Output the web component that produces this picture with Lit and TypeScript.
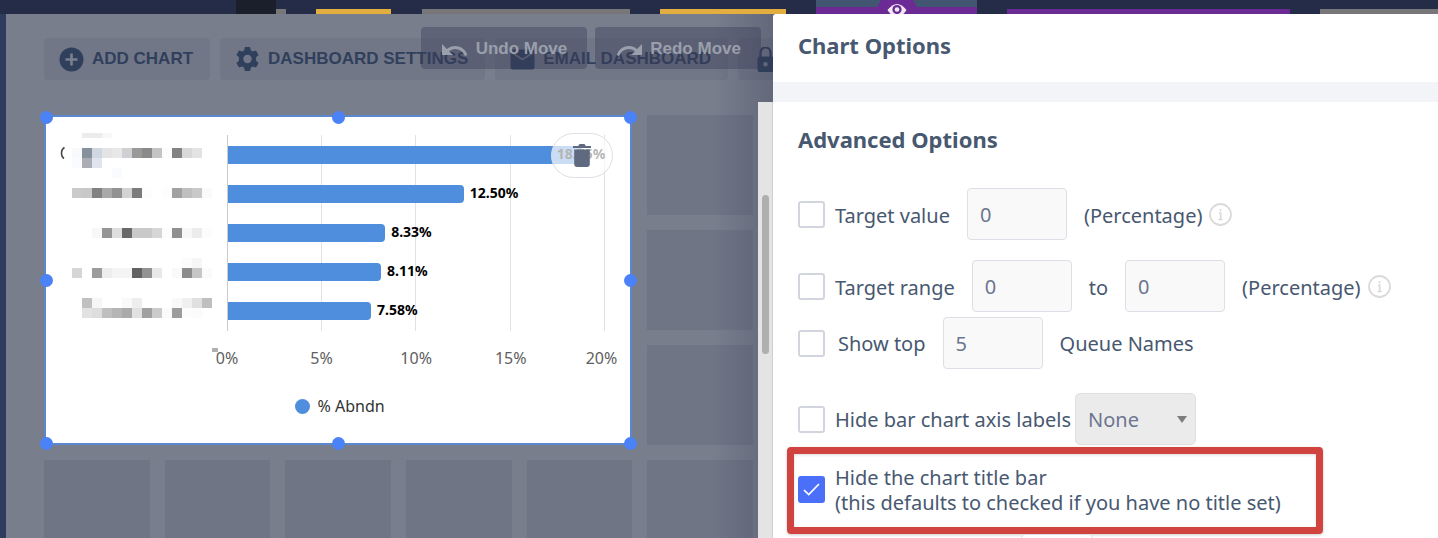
import { LitElement, html, css, svg, nothing } from "lit";
import { customElement, state } from "lit/decorators.js";

interface Bar {
  value: number;
}

const MAX = 20;
const BARS: Bar[] = [{ value: 18.75 }, { value: 12.5 }, { value: 8.33 }, { value: 8.11 }, { value: 7.58 }];
const TICKS = [0, 5, 10, 15, 20];

// Masked queue names: [y, height, first column x, shades of 10px cells]
const MASK: [number, number, number, string[]][] = [
  [17, 5, 36, ["ececec", "ececec", "f7f7f7"]],
  [32, 10, 26, ["f8f9fb", "87909d", "d0d6e2", "e4e4e4", "e8e8e8", "cfd0d4", "999999", "8a8a8a", "c4c4c4", "fcfcfc", "838383", "d8d8d8", "e3e3e3"]],
  [42, 10, 26, ["fafbfe", "abadb6", "e0e4ec"]],
  [52, 10, 66, ["fafbfe"]],
  [72, 10, 26, ["cacaca", "c8c8c8", "818181", "a9a9a9", "929292", "d3d3d3", "7b7b7b", "fdfdfd", "ffffff", "fdfdfd", "a1a1a1", "bfbfbf", "c9c9c9", "fafafa"]],
  [112, 10, 46, ["f8f8f8", "959595", "dedede", "696969", "c9c9c9", "c9c9c9", "d6d6d6", "fcfcfc", "909090", "f7f7f7", "ececec", "fcfcfc"]],
  [142, 10, 126, ["ffffff", "fbfbfb", "f6f6f6"]],
  [152, 10, 26, ["d6d6d6", "ffffff", "9c9c9c", "ededed", "f4f4f4", "f4f4f4", "626262", "929292", "e8e8e8", "ffffff", "f9f9f9", "8c8c8c", "c6c6c6", "fafafa"]],
  [182, 10, 36, ["c0c0c0", "f6f6f6", "ffffff", "ffffff", "f9f9f9", "eeeeee", "ffffff", "ffffff", "ffffff", "f9f9f9", "f0f0f0", "e0e0e0", "bfbfbf"]],
  [192, 10, 36, ["e2e2e2", "dddddd", "bfbfbf", "b5b5b5", "aaaaaa", "e1e1e1", "a0a0a0", "cbcbcb", "fafafa", "9d9d9d", "fcfcfc", "fbfbfb"]],
];

const icons = {
  add: svg`<circle cx="12" cy="12.500" r="12"/><path d="M12 6.500v12M6 12.500h12" stroke="#7a808e" stroke-width="2.600"/>`,
  gear: svg`<path fill-rule="evenodd" d="M9.400 0h5.200l.7 3.200 2 1.200 3.200-1 2.600 4.500-2.500 2.300v3.600l2.500 2.300-2.600 4.500-3.200-1-2 1.200-.7 3.200H9.400l-.7-3.200-2-1.200-3.200 1L.9 16.100l2.500-2.300v-3.600L.9 7.900l2.600-4.500 3.200 1 2-1.200zM12 7.800a4.200 4.200 0 1 0 0 8.400 4.200 4.200 0 0 0 0-8.400z"/>`,
  mail: svg`<path d="M2 2.500h20a2 2 0 0 1 2 2v16a2 2 0 0 1-2 2H2a2 2 0 0 1-2-2v-16a2 2 0 0 1 2-2z"/><path d="M2 6l10 6.500L22 6" fill="none" stroke="#6a7080" stroke-width="1.800"/>`,
  lock: svg`<path fill-rule="evenodd" d="M6 9.500h12a2 2 0 0 1 2 2V23a2 2 0 0 1-2 2H6a2 2 0 0 1-2-2V11.500a2 2 0 0 1 2-2zm6 5.500a2.300 2.300 0 1 0 0 4.600 2.300 2.300 0 0 0 0-4.600z"/><path d="M7 10V5.500a5 5 0 0 1 10 0V10" fill="none" stroke="currentColor" stroke-width="2.200"/>`,
  undo: svg`<path d="M0 4v11h11L7 11.200a10 10 0 0 1 15.800 4.800l2.700-.9A13 13 0 0 0 4.900 9z"/>`,
  redo: svg`<path d="M26 4v11H15l4-3.800A10 10 0 0 0 3.200 16l-2.700-.9A13 13 0 0 1 21.100 9z"/>`,
  trash: svg`<path d="M0 2h5.200L6.500 0h5l1.300 2H18v2.100H0z"/><path d="M1.200 5.500h15.600V20a3 3 0 0 1-3 3H4.200a3 3 0 0 1-3-3z"/>`,
};

@customElement("app-root")
export class AppRoot extends LitElement {
  @state() private hideTitle = true;

  static styles = css`
    :host {
      display: flex;
      flex-direction: column;
      height: 100vh;
      overflow: hidden;
      background: #787e8c;
      font-family: "Noto Sans", "Open Sans", sans-serif;
      color: #475870;
    }
    * {
      box-sizing: border-box;
    }
    svg {
      display: block;
      flex: none;
    }
    button,
    input,
    select {
      font: inherit;
      margin: 0;
    }
    .strip {
      flex: none;
      height: 14px;
      display: grid;
      align-items: end;
      grid-template-columns: 236fr 40fr 10fr 30fr 75fr 31fr 208fr 30fr 126fr 30fr 161fr 30fr 283fr 30fr 118fr;
      background: #242c47;
    }
    .seg {
      height: 5px;
    }
    .ink {
      height: 14px;
      background: #1a1f2b;
    }
    .grey {
      background: #77777a;
    }
    .yellow {
      background: #e2ae3f;
    }
    .purple {
      background: #6b2a94;
    }
    .active {
      height: 14px;
      display: flex;
      justify-content: center;
      background: linear-gradient(#425672 7px, #6b2a94 7px);
    }
    .body {
      flex: 1;
      min-height: 0;
      display: flex;
    }
    .rail {
      flex: none;
      width: 6px;
      background: #2f3c5e;
    }
    .wrap {
      flex: 1;
      min-width: 0;
      display: flex;
      position: relative;
      overflow: hidden;
    }
    .dash {
      flex: 1;
      min-width: 0;
      padding: 24px 20px 0 38px;
    }
    .tools {
      display: flex;
      gap: 10px;
      height: 77px;
      align-items: flex-start;
      margin-right: -35px;
      overflow: hidden;
    }
    .tool {
      flex: none;
      display: flex;
      align-items: center;
      gap: 8px;
      height: 42px;
      padding: 0 17px 0 15px;
      border: 0;
      border-radius: 4px;
      background: #717787;
      color: #30405c;
      font: bold 17px "Liberation Sans", Arial, sans-serif;
    }
    .history {
      position: absolute;
      top: 13px;
      right: 12px;
      display: flex;
      gap: 8px;
    }
    .step {
      display: flex;
      align-items: center;
      gap: 8px;
      height: 42px;
      padding: 1px 20px 0 21px;
      border: 0;
      border-radius: 4px;
      background: rgba(58, 61, 88, 0.4);
      color: #9a9fac;
      font: bold 17px "Liberation Sans", Arial, sans-serif;
    }
    .grid {
      display: grid;
      grid-template-columns: repeat(6, 1fr);
      grid-auto-rows: 100px;
      gap: 15px;
      margin-right: -15px;
    }
    .tile {
      background: #6f7585;
    }
    .card {
      grid-column: 1 / span 5;
      grid-row: 1 / span 3;
      position: relative;
      display: flex;
      flex-direction: column;
      border: 2px solid #5b86d0;
      background: #fff;
    }
    .handle {
      position: absolute;
      width: 13px;
      height: 13px;
      margin: -6px;
      border-radius: 50%;
      background: #4c82f7;
    }
    .chart {
      display: grid;
      grid-template-columns: 181px 1fr;
      padding: 18px 25px 0 0;
    }
    .names {
      margin-top: -19px;
    }
    .plot {
      position: relative;
      height: 196px;
      border-left: 1px solid #c9cbd2;
      background: repeating-linear-gradient(90deg, transparent 0 calc(25% - 1px), #e1e1e4 calc(25% - 1px) 25%);
    }
    .line {
      position: relative;
      display: flex;
      align-items: center;
      height: 39px;
      gap: 6px;
      color: #000;
      font-size: 14px;
      line-height: 18px;
      font-weight: 700;
    }
    .bar {
      flex: none;
      height: 18px;
      border-radius: 0 4px 4px 0;
      background: #4f8edc;
    }
    .value {
      padding-bottom: 2px;
    }
    .inside {
      position: absolute;
      right: 0;
    }
    .axis {
      display: grid;
      grid-template-columns: repeat(4, 25%) 87px;
      margin: 16px 0 0 -12.5%;
      width: 100%;
      font-size: 16px;
      line-height: 22px;
      color: #606060;
      text-align: center;
    }
    .legend {
      display: flex;
      align-items: center;
      justify-content: center;
      gap: 8px;
      padding-left: 3px;
      margin-top: 26px;
      font-size: 16px;
      line-height: 22px;
      color: #333;
    }
    .dot {
      width: 15px;
      height: 15px;
      border-radius: 50%;
      background: #4f8edc;
    }
    .trash {
      position: absolute;
      top: 16px;
      right: 17px;
      width: 62px;
      height: 45px;
      display: grid;
      place-items: center;
      padding: 0;
      border: 1px solid #dedfe6;
      border-radius: 23px;
      background: rgba(255, 255, 255, 0.7);
      color: #5f6a80;
    }
    .track {
      flex: none;
      position: relative;
      width: 15px;
      margin-top: 88px;
      padding: 93px 3px 0 4px;
      background: #e4e4e4;
      border-right: 1px solid #cfcfcf;
    }
    .thumb {
      height: 159px;
      border-radius: 4px;
      background: #afafaf;
    }
    .shade {
      position: absolute;
      top: 0;
      right: 0;
      bottom: 0;
      width: 60px;
      background: linear-gradient(90deg, rgba(50, 55, 80, 0), rgba(50, 55, 80, 0.3));
      pointer-events: none;
    }
    .drawer {
      flex: 0 0 46.25%;
      display: flex;
      flex-direction: column;
      overflow: hidden;
      border-radius: 4px 0 0 0;
      background: #f3f4f7;
    }
    .head,
    .options {
      flex: none;
      background: #fff;
      padding: 0 25px;
    }
    .head {
      height: 68px;
      margin-bottom: 20px;
    }
    .options {
      border-radius: 4px 0 0 0;
    }
    .title {
      margin: 0;
      font-size: 22px;
      line-height: 30px;
      font-weight: 700;
    }
    .head .title {
      padding-top: 16px;
    }
    .options .title {
      padding-top: 22px;
      margin-bottom: 34px;
    }
    .row {
      display: flex;
      align-items: center;
      height: 52px;
      font-size: 20px;
      line-height: 25px;
    }
    .row + .row {
      margin-top: 20px;
    }
    .row + .tight {
      margin-top: 5px;
    }
    .row + .loose {
      margin-top: 24px;
    }
    .txt {
      padding-top: 3px;
    }
    .tick {
      display: flex;
      align-items: center;
      gap: 10px;
    }
    .wide {
      gap: 13px;
    }
    .box {
      display: grid;
      place-items: center;
    }
    .box > * {
      grid-area: 1 / 1;
    }
    .box svg {
      pointer-events: none;
    }
    .check {
      appearance: none;
      width: 27px;
      height: 27px;
      border: 2px solid #d2d5dd;
      border-radius: 3px;
      background: #fff;
    }
    .check:checked {
      border-color: #4b6ff8;
      background: #4b6ff8;
    }
    .num {
      width: 100px;
      height: 52px;
      margin: 0 17px;
      padding: 0 12px;
      border: 1px solid #dddfe6;
      border-radius: 4px;
      background: #f9f9f9;
      color: #6b7690;
    }
    .info {
      margin-left: 7px;
    }
    .pick {
      margin-left: 4px;
      display: grid;
      align-items: center;
      justify-items: end;
    }
    .pick > * {
      grid-area: 1 / 1;
    }
    .pick svg {
      margin-right: 9px;
      pointer-events: none;
      z-index: 1;
    }
    .select {
      appearance: none;
      width: 121px;
      height: 52px;
      padding: 0 12px;
      border: 1px solid #dedfe2;
      border-radius: 5px;
      background: #ebebeb;
      color: #6b7690;
    }
    .mark {
      display: flex;
      align-items: center;
      width: 536px;
      max-width: 100%;
      height: 87px;
      margin: 2px 0 0 -11px;
      padding: 0 0 2px 4px;
      border: 7px solid #d0433f;
      border-radius: 4px;
      box-shadow: 0 1px 3px rgba(0, 0, 0, 0.2), inset 0 1px 3px rgba(0, 0, 0, 0.15);
      font-size: 20px;
      line-height: 25px;
    }
    .next {
      width: 72px;
      height: 52px;
      margin-left: 223px;
      border: 1px solid #dddfe6;
      border-radius: 4px;
      background: #fff;
    }
  `;

  private tool(icon: unknown, label: string, text = true) {
    return html`<button class="tool" type="button" aria-label=${label}>
      <svg width="25" height="25" viewBox="0 0 24 25" fill="currentColor" aria-hidden="true">${icon}</svg>${text
        ? label
        : nothing}
    </button>`;
  }

  private step(icon: unknown, label: string) {
    return html`<button class="step" type="button">
      <svg width="26" height="20" viewBox="0 0 26 18" fill="currentColor" aria-hidden="true">${icon}</svg>${label}
    </button>`;
  }

  private box(id: string, checked = false) {
    return html`<span class="box">
      <input class="check" type="checkbox" id=${id} .checked=${checked}
        @change=${(e: Event) => {
          if (id === "hide-title") this.hideTitle = (e.target as HTMLInputElement).checked;
        }} />
      ${checked
        ? html`<svg width="17" height="13" viewBox="0 0 17 13" aria-hidden="true">
            <path d="M1 7l4.700 4.500L16 1" fill="none" stroke="#fff" stroke-width="1.700" />
          </svg>`
        : nothing}
    </span>`;
  }

  private info() {
    return html`<svg class="info" width="23" height="23" viewBox="0 0 23 23" role="img" aria-label="Info">
      <circle cx="11.500" cy="11.500" r="10.500" fill="none" stroke="#dadada" stroke-width="1.800" />
      <path d="M11.500 6v2.200M10 10.200h1.700v6M9.500 16.500h4" fill="none" stroke="#d8d8d8" stroke-width="1.600" />
    </svg>`;
  }

  private chart() {
    return html`<section class="card">
      <div class="chart">
        <svg class="names" width="181" height="240" viewBox="0 0 181 240" shape-rendering="crispEdges" aria-hidden="true">
          ${MASK.map(([y, h, x, cells]) =>
            cells.map((c, i) => svg`<rect x=${x + i * 10} y=${y} width="10" height=${h} fill=${"#" + c} />`)
          )}
          <path d="M18.500 31.500q-3 1.500-3 5.500t2.500 5.500" fill="none" stroke="#444" stroke-width="1.500" shape-rendering="auto" />
          <rect x="166" y="232" width="6" height="4" fill="#b0b0b0" />
        </svg>
        <div>
          <div class="plot">
            ${BARS.map(
              ({ value }) => html`<div class="line">
                <div class="bar" style="width:${(value / MAX) * 100}%"></div>
                <span class=${value > 18 ? "value inside" : "value"}>${value.toFixed(2)}%</span>
              </div>`
            )}
          </div>
          <div class="axis">${TICKS.map((t) => html`<span>${t}%</span>`)}</div>
        </div>
      </div>
      <div class="legend"><span class="dot"></span>% Abndn</div>
      <button class="trash" type="button" aria-label="Delete chart">
        <svg width="18" height="23" viewBox="0 0 18 23" fill="currentColor">${icons.trash}</svg>
      </button>
      ${[0, 50, 100].map((y) =>
        [0, 50, 100].map((x) =>
          x === 50 && y === 50 ? nothing : html`<i class="handle" style="left:${x}%;top:${y}%"></i>`
        )
      )}
    </section>`;
  }

  render() {
    return html`
      <div class="strip">
        <i></i><i class="seg ink"></i><i class="seg grey"></i><i></i><i class="seg yellow"></i><i></i>
        <i class="seg grey"></i><i></i><i class="seg yellow"></i><i></i>
        <div class="active">
          <svg width="40" height="14" viewBox="0 0 40 14" aria-hidden="true">
            <path d="M0 14V7L4 0h32l4 7v7z" fill="#6b2a94" />
            <path d="M10.500 10Q20-2 29.500 10 27 14 25 15H15q-2-1-4.500-5z" fill="#f1eaf6" />
            <circle cx="20" cy="9.500" r="4.600" fill="#6b2a94" />
            <circle cx="20" cy="9.500" r="2.300" fill="#f1eaf6" />
          </svg>
        </div>
        <i></i><i class="seg purple"></i><i></i><i class="seg grey"></i>
      </div>
      <div class="body">
        <div class="rail"></div>
        <div class="wrap">
          <main class="dash">
            <div class="tools">
              ${this.tool(icons.add, "ADD CHART")} ${this.tool(icons.gear, "DASHBOARD SETTINGS")}
              ${this.tool(icons.mail, "EMAIL DASHBOARD")} ${this.tool(icons.lock, "Lock", false)}
            </div>
            <div class="grid">
              ${this.chart()} ${Array.from({ length: 9 }, () => html`<div class="tile"></div>`)}
            </div>
          </main>
          <div class="shade"></div>
          <div class="history">${this.step(icons.undo, "Undo Move")} ${this.step(icons.redo, "Redo Move")}</div>
          <div class="track"><div class="thumb"></div></div>
        </div>
        <aside class="drawer">
          <header class="head"><h1 class="title">Chart Options</h1></header>
          <section class="options">
            <h2 class="title">Advanced Options</h2>
            <div class="row">
              <label class="tick">${this.box("target")}<span class="txt">Target value</span></label>
              <input class="num" value="0" aria-label="Target value" />
              <span class="txt">(Percentage)</span>${this.info()}
            </div>
            <div class="row">
              <label class="tick">${this.box("range")}<span class="txt">Target range</span></label>
              <input class="num" value="0" aria-label="Range from" />
              <span class="txt">to</span>
              <input class="num" value="0" aria-label="Range to" />
              <span class="txt">(Percentage)</span>${this.info()}
            </div>
            <div class="row tight">
              <label class="tick wide">${this.box("top")}Show top</label>
              <input class="num" value="5" aria-label="Show top" />
              <span>Queue Names</span>
            </div>
            <div class="row loose">
              <label class="tick">${this.box("labels")}<span>Hide bar chart axis labels</span></label>
              <span class="pick">
                <select class="select" aria-label="Axis labels"><option>None</option></select>
                <svg width="10" height="7" viewBox="0 0 10 7" aria-hidden="true"><path d="M0 0h10L5 7z" fill="#7d7d7d" /></svg>
              </span>
            </div>
            <div class="mark">
              <label class="tick">${this.box("hide-title", this.hideTitle)}
                <span>Hide the chart title bar<br />(this defaults to checked if you have no title set)</span>
              </label>
            </div>
            <div class="next"></div>
          </section>
        </aside>
      </div>
    `;
  }
}
